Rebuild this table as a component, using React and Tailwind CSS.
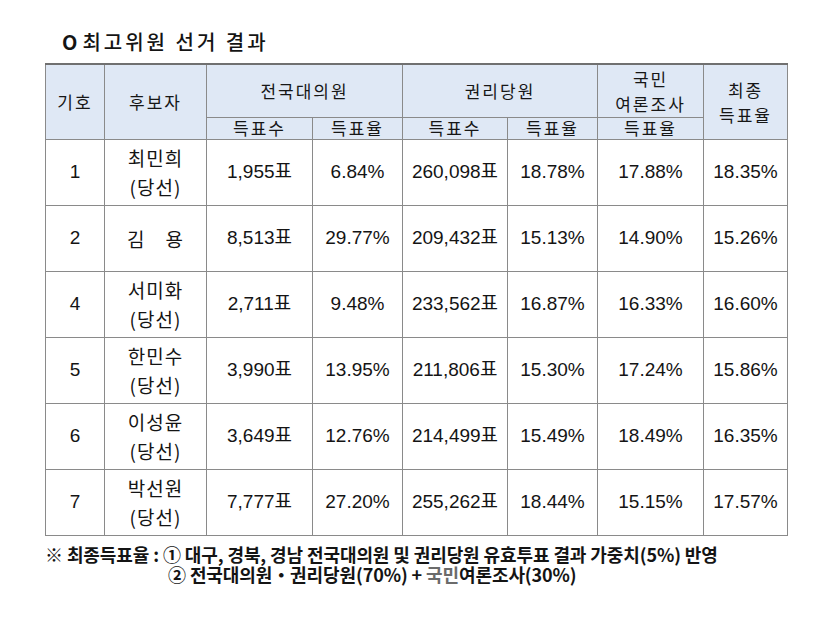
import React from "react";

const rows = [
  { no: "1", name: "최민희", elected: true, dv: "1,955표", dr: "6.84%", kv: "260,098표", kr: "18.78%", poll: "17.88%", total: "18.35%" },
  { no: "2", name: "김　용", elected: false, dv: "8,513표", dr: "29.77%", kv: "209,432표", kr: "15.13%", poll: "14.90%", total: "15.26%" },
  { no: "4", name: "서미화", elected: true, dv: "2,711표", dr: "9.48%", kv: "233,562표", kr: "16.87%", poll: "16.33%", total: "16.60%" },
  { no: "5", name: "한민수", elected: true, dv: "3,990표", dr: "13.95%", kv: "211,806표", kr: "15.30%", poll: "17.24%", total: "15.86%" },
  { no: "6", name: "이성윤", elected: true, dv: "3,649표", dr: "12.76%", kv: "214,499표", kr: "15.49%", poll: "18.49%", total: "16.35%" },
  { no: "7", name: "박선원", elected: true, dv: "7,777표", dr: "27.20%", kv: "255,262표", kr: "18.44%", poll: "15.15%", total: "17.57%" },
];

const th = "border border-[#8a8a8a] bg-[#dfe8f5] font-normal text-[17px] text-[#161616] tracking-[2px] leading-[25px] text-center align-middle p-0";
const sub = "border border-[#8a8a8a] bg-[#dfe8f5] font-normal text-[17px] text-[#161616] tracking-[2px] leading-[18px] text-center align-middle p-0";
const td = "border border-[#8a8a8a] text-[19px] text-[#141414] text-center align-middle p-0";

const App = () => {
  return (
    <div
      className="w-[834px] h-[630px] bg-white pt-[28px]"
      style={{ fontFamily: '"Liberation Sans", "Noto Sans CJK KR", sans-serif' }}
    >
      <h2
        className="ml-[62px] text-[20px] leading-[28px] font-medium text-[#141414] tracking-[3px]"
        style={{ fontFamily: '"Noto Sans CJK KR", sans-serif' }}
      >
        <span className="font-semibold mr-[2px]">O</span>최고위원 선거 결과
      </h2>

      <table className="ml-[45px] mt-[7px] border-collapse table-fixed w-[742px] border-t-2 border-t-[#707070]">
        <colgroup>
          <col className="w-[59px]" />
          <col className="w-[102px]" />
          <col className="w-[106px]" />
          <col className="w-[90px]" />
          <col className="w-[105px]" />
          <col className="w-[90px]" />
          <col className="w-[106px]" />
          <col className="w-[84px]" />
        </colgroup>
        <thead style={{ fontFamily: '"Noto Sans CJK KR", sans-serif' }}>
          <tr className="h-[53px]">
            <th rowSpan={2} className={th}>기호</th>
            <th rowSpan={2} className={th}>후보자</th>
            <th colSpan={2} className={th}>전국대의원</th>
            <th colSpan={2} className={th}>권리당원</th>
            <th className={th}>국민<br />여론조사</th>
            <th rowSpan={2} className={th}>최종<br />득표율</th>
          </tr>
          <tr className="h-[22px]">
            <th className={sub}>득표수</th>
            <th className={sub}>득표율</th>
            <th className={sub}>득표수</th>
            <th className={sub}>득표율</th>
            <th className={sub}>득표율</th>
          </tr>
        </thead>
        <tbody>
          {rows.map((r) => (
            <tr key={r.no} className="h-[66px]">
              <td className={td}>{r.no}</td>
              <td
                className={`${td} text-[18px] leading-[29px] tracking-[1px]`}
                style={{ fontFamily: '"Noto Sans CJK KR", sans-serif' }}
              >
                {r.name}
                {r.elected && (
                  <>
                    <br />
                    (당선)
                  </>
                )}
              </td>
              <td className={td}>{r.dv}</td>
              <td className={td}>{r.dr}</td>
              <td className={td}>{r.kv}</td>
              <td className={td}>{r.kr}</td>
              <td className={td}>{r.poll}</td>
              <td className={td}>{r.total}</td>
            </tr>
          ))}
        </tbody>
      </table>

      <div
        className="ml-[45px] mt-[8px] text-[18px] leading-[20px] font-semibold text-[#141414] tracking-[-0.1px]"
        style={{ fontFamily: '"Noto Sans CJK KR", sans-serif' }}
      >
        <p>※ 최종득표율 : ① 대구, 경북, 경남 전국대의원 및 권리당원 유효투표 결과 가중치(5%) 반영</p>
        <p className="ml-[123px]">
          ② 전국대의원・권리당원(70%) + <span className="text-[#6b6b6b]">국민</span>여론조사(30%)
        </p>
      </div>
    </div>
  );
};

export default App;
